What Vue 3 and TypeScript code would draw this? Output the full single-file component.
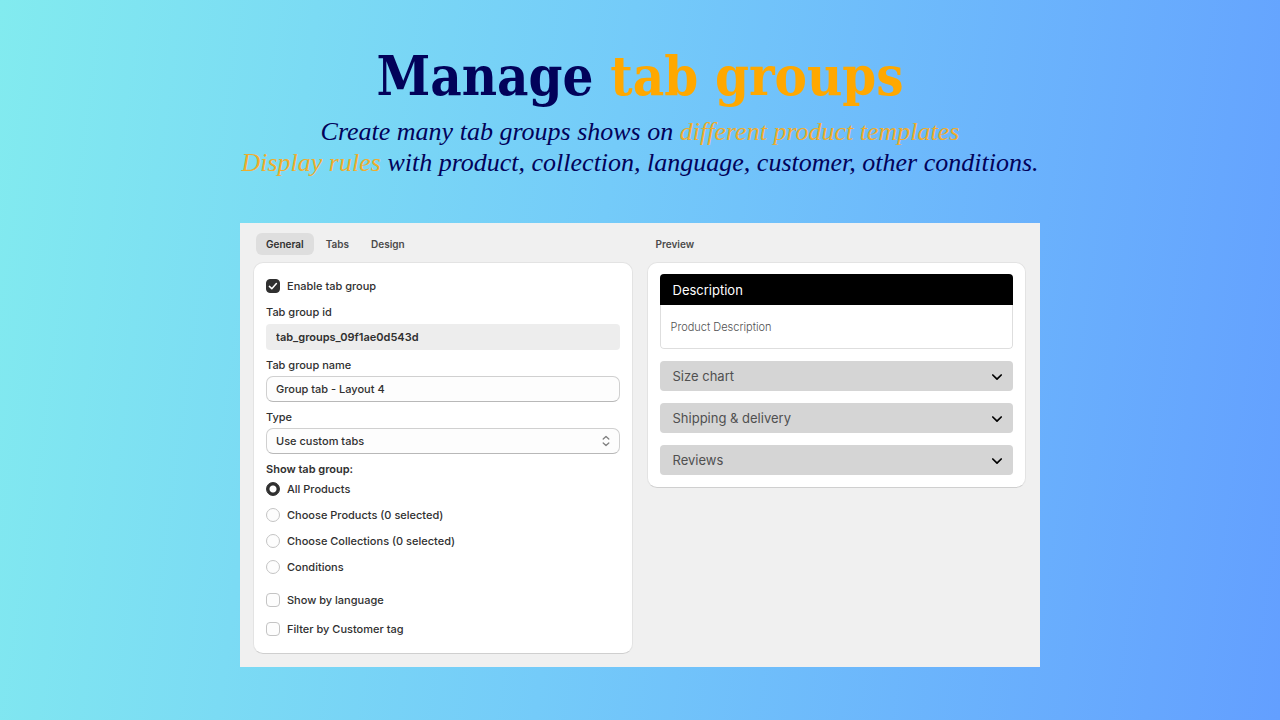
<script setup lang="ts">
import { ref } from 'vue'

const tabs = ['General', 'Tabs', 'Design']
const activeTab = ref('General')
const enabled = ref(true)
const groupId = 'tab_groups_09f1ae0d543d'
const groupName = ref('Group tab - Layout 4')
const groupType = ref('custom')
const target = ref('all')
const targets = [
  { value: 'all', label: 'All Products' },
  { value: 'products', label: 'Choose Products (0 selected)' },
  { value: 'collections', label: 'Choose Collections (0 selected)' },
  { value: 'conditions', label: 'Conditions' },
]
const byLanguage = ref(false)
const byCustomerTag = ref(false)
const closedSections = ['Size chart', 'Shipping & delivery', 'Reviews']
</script>

<template>
  <main class="page">
    <header class="hero">
      <h1>Manage <span class="accent">tab groups</span></h1>
      <p>
        Create many tab groups shows on <span class="accent">different product templates</span><br />
        <span class="accent">Display rules</span> with product, collection, language, customer, other conditions.
      </p>
    </header>

    <section class="window">
      <div class="column">
        <nav class="tabs">
          <button
            v-for="tab in tabs"
            :key="tab"
            type="button"
            class="tab"
            :class="{ active: tab === activeTab }"
            @click="activeTab = tab"
          >{{ tab }}</button>
        </nav>
        <form class="card settings" @submit.prevent>
          <label class="choice"><input v-model="enabled" type="checkbox" />Enable tab group</label>

          <label class="label" for="group-id">Tab group id</label>
          <input id="group-id" class="field locked" type="text" :value="groupId" readonly />

          <label class="label" for="group-name">Tab group name</label>
          <input id="group-name" v-model="groupName" class="field" type="text" />

          <label class="label" for="group-type">Type</label>
          <div class="select-wrap">
            <select id="group-type" v-model="groupType" class="field">
              <option value="custom">Use custom tabs</option>
            </select>
            <svg class="updown" viewBox="0 0 8 12" width="8" height="12" aria-hidden="true">
              <path d="M1.2 4 L4 1.4 L6.8 4 M1.2 8 L4 10.6 L6.8 8" />
            </svg>
          </div>

          <fieldset class="targets">
            <legend>Show tab group:</legend>
            <label v-for="item in targets" :key="item.value" class="choice">
              <input v-model="target" type="radio" name="target" :value="item.value" />{{ item.label }}
            </label>
          </fieldset>

          <div class="filters">
            <label class="choice"><input v-model="byLanguage" type="checkbox" />Show by language</label>
            <label class="choice"><input v-model="byCustomerTag" type="checkbox" />Filter by Customer tag</label>
          </div>
        </form>
      </div>

      <div class="column">
        <h2>Preview</h2>
        <div class="card preview">
          <div class="open-section">
            <button type="button" class="bar open">Description</button>
            <div class="content">Product Description</div>
          </div>
          <button v-for="title in closedSections" :key="title" type="button" class="bar">
            {{ title }}
            <svg viewBox="0 0 12 10" width="12" height="10" aria-hidden="true">
              <path d="M1.8 4 L6 8.2 L10.2 4" />
            </svg>
          </button>
        </div>
      </div>
    </section>
  </main>
</template>

<style>
body {
  margin: 0;
}
</style>

<style scoped>
* {
  box-sizing: border-box;
}

.page {
  min-height: 100vh;
  padding: 42px 0 53px;
  display: flex;
  flex-direction: column;
  align-items: center;
  background: linear-gradient(98deg, #82ebef 0%, #74cbf9 46%, #639fff 100%);
  font-family: Inter, 'Liberation Sans', sans-serif;
  color: #303030;
}

.hero {
  text-align: center;
  color: #02025a;
}

.hero h1 {
  margin: 0;
  font: bold 54px/68px 'DejaVu Serif Condensed', 'DejaVu Serif', serif;
}

.hero p {
  margin: 6px 0 0;
  font: italic 26px/31px 'Liberation Serif', serif;
}

.accent {
  color: #ffa800;
}

.hero p .accent {
  color: #f0ad2c;
}

.window {
  width: 62.5%;
  min-width: 640px;
  margin-top: 45px;
  padding: 10px 14px 13px 13px;
  flex: 1;
  display: grid;
  grid-template-columns: 1fr 1fr;
  gap: 14px;
  background: #f0f0f0;
}

.column {
  display: flex;
  flex-direction: column;
  min-width: 0;
}

.tabs {
  display: flex;
  gap: 2px;
  height: 29px;
  padding-left: 3px;
  align-items: flex-start;
}

.tab {
  height: 22px;
  padding: 0 10px;
  border: 0;
  border-radius: 6px;
  background: none;
  font: 600 10px/22px Inter, sans-serif;
  color: #4a4a4a;
}

.tab.active {
  background: #dedede;
  color: #303030;
}

h2 {
  margin: 0;
  height: 29px;
  padding-left: 9px;
  font-size: 10px;
  font-weight: 600;
  line-height: 22px;
  color: #4a4a4a;
}

.card {
  border: 1px solid #e3e3e3;
  border-bottom-color: #cfcfcf;
  border-radius: 10px;
  background: #fff;
}

.settings {
  padding: 16px 12px;
  display: flex;
  flex-direction: column;
  flex: 1;
  font-size: 11px;
  font-weight: 500;
}

.choice {
  display: flex;
  align-items: center;
  gap: 7px;
  height: 14px;
  line-height: 14px;
}

.choice input {
  appearance: none;
  flex: none;
  width: 14px;
  height: 14px;
  margin: 0;
  border: 1px solid #c4c4c4;
  border-radius: 4px;
  background: #fdfdfd;
}

.choice input[type='radio'] {
  border-radius: 50%;
}

.choice input[type='radio']:checked {
  border-color: #303030;
  background: radial-gradient(circle, #fff 3px, #303030 4px);
}

.choice input[type='checkbox']:checked {
  border-color: #303030;
  background: #303030 url("data:image/svg+xml,%3Csvg xmlns='http://www.w3.org/2000/svg' viewBox='0 0 12 12'%3E%3Cpath d='M2.4 6.4 4.8 8.7 9.4 3.5' fill='none' stroke='white' stroke-width='1.5' stroke-linecap='round' stroke-linejoin='round'/%3E%3C/svg%3E") center / 12px no-repeat;
}

.label {
  margin-top: 6px;
  height: 20px;
  line-height: 18px;
}

.choice + .label {
  margin-top: 10px;
}

.field {
  width: 100%;
  height: 26px;
  margin: 0;
  padding: 0 9px;
  border: 1px solid #d0d0d0;
  border-bottom-color: #b8b8b8;
  border-radius: 7px;
  background: #fdfdfd;
  font: 500 11px/16px Inter, sans-serif;
  color: #303030;
  appearance: none;
}

.locked {
  margin-top: 1px;
  border-color: transparent;
  border-radius: 4px;
  background: #ededed;
  font-weight: 600;
}

.select-wrap {
  position: relative;
  height: 26px;
}

.updown {
  position: absolute;
  right: 10px;
  top: 7px;
  fill: none;
  stroke: #808080;
  stroke-width: 1.3;
  stroke-linecap: round;
  stroke-linejoin: round;
}

.targets {
  margin: 7px 0 0;
  padding: 0;
  border: 0;
  display: flex;
  flex-direction: column;
  gap: 12px;
}

.targets legend {
  height: 21px;
  padding: 0;
  line-height: 16px;
  font-weight: 600;
}

.filters {
  margin-top: 19px;
  display: flex;
  flex-direction: column;
  gap: 15px;
}

.preview {
  padding: 11px 12px 12px;
  display: flex;
  flex-direction: column;
  gap: 12px;
}

.bar {
  display: flex;
  align-items: center;
  justify-content: space-between;
  width: 100%;
  height: 30px;
  padding: 0 10px 0 13px;
  border: 0;
  border-radius: 4px;
  background: #d5d5d5;
  font: 400 13px/20px Inter, sans-serif;
  color: #505050;
}

.bar.open {
  height: 31px;
  border-radius: 0;
  background: #000;
  color: #fff;
}

.bar svg {
  fill: none;
  stroke: #000;
  stroke-width: 1.7;
  stroke-linecap: round;
  stroke-linejoin: round;
}

.open-section {
  border-radius: 4px;
  overflow: hidden;
}

.content {
  height: 44px;
  padding: 0 10px;
  border: 1px solid #dedede;
  border-top: 0;
  border-radius: 0 0 4px 4px;
  font-size: 11px;
  font-weight: 300;
  line-height: 44px;
  color: #505050;
}
</style>
